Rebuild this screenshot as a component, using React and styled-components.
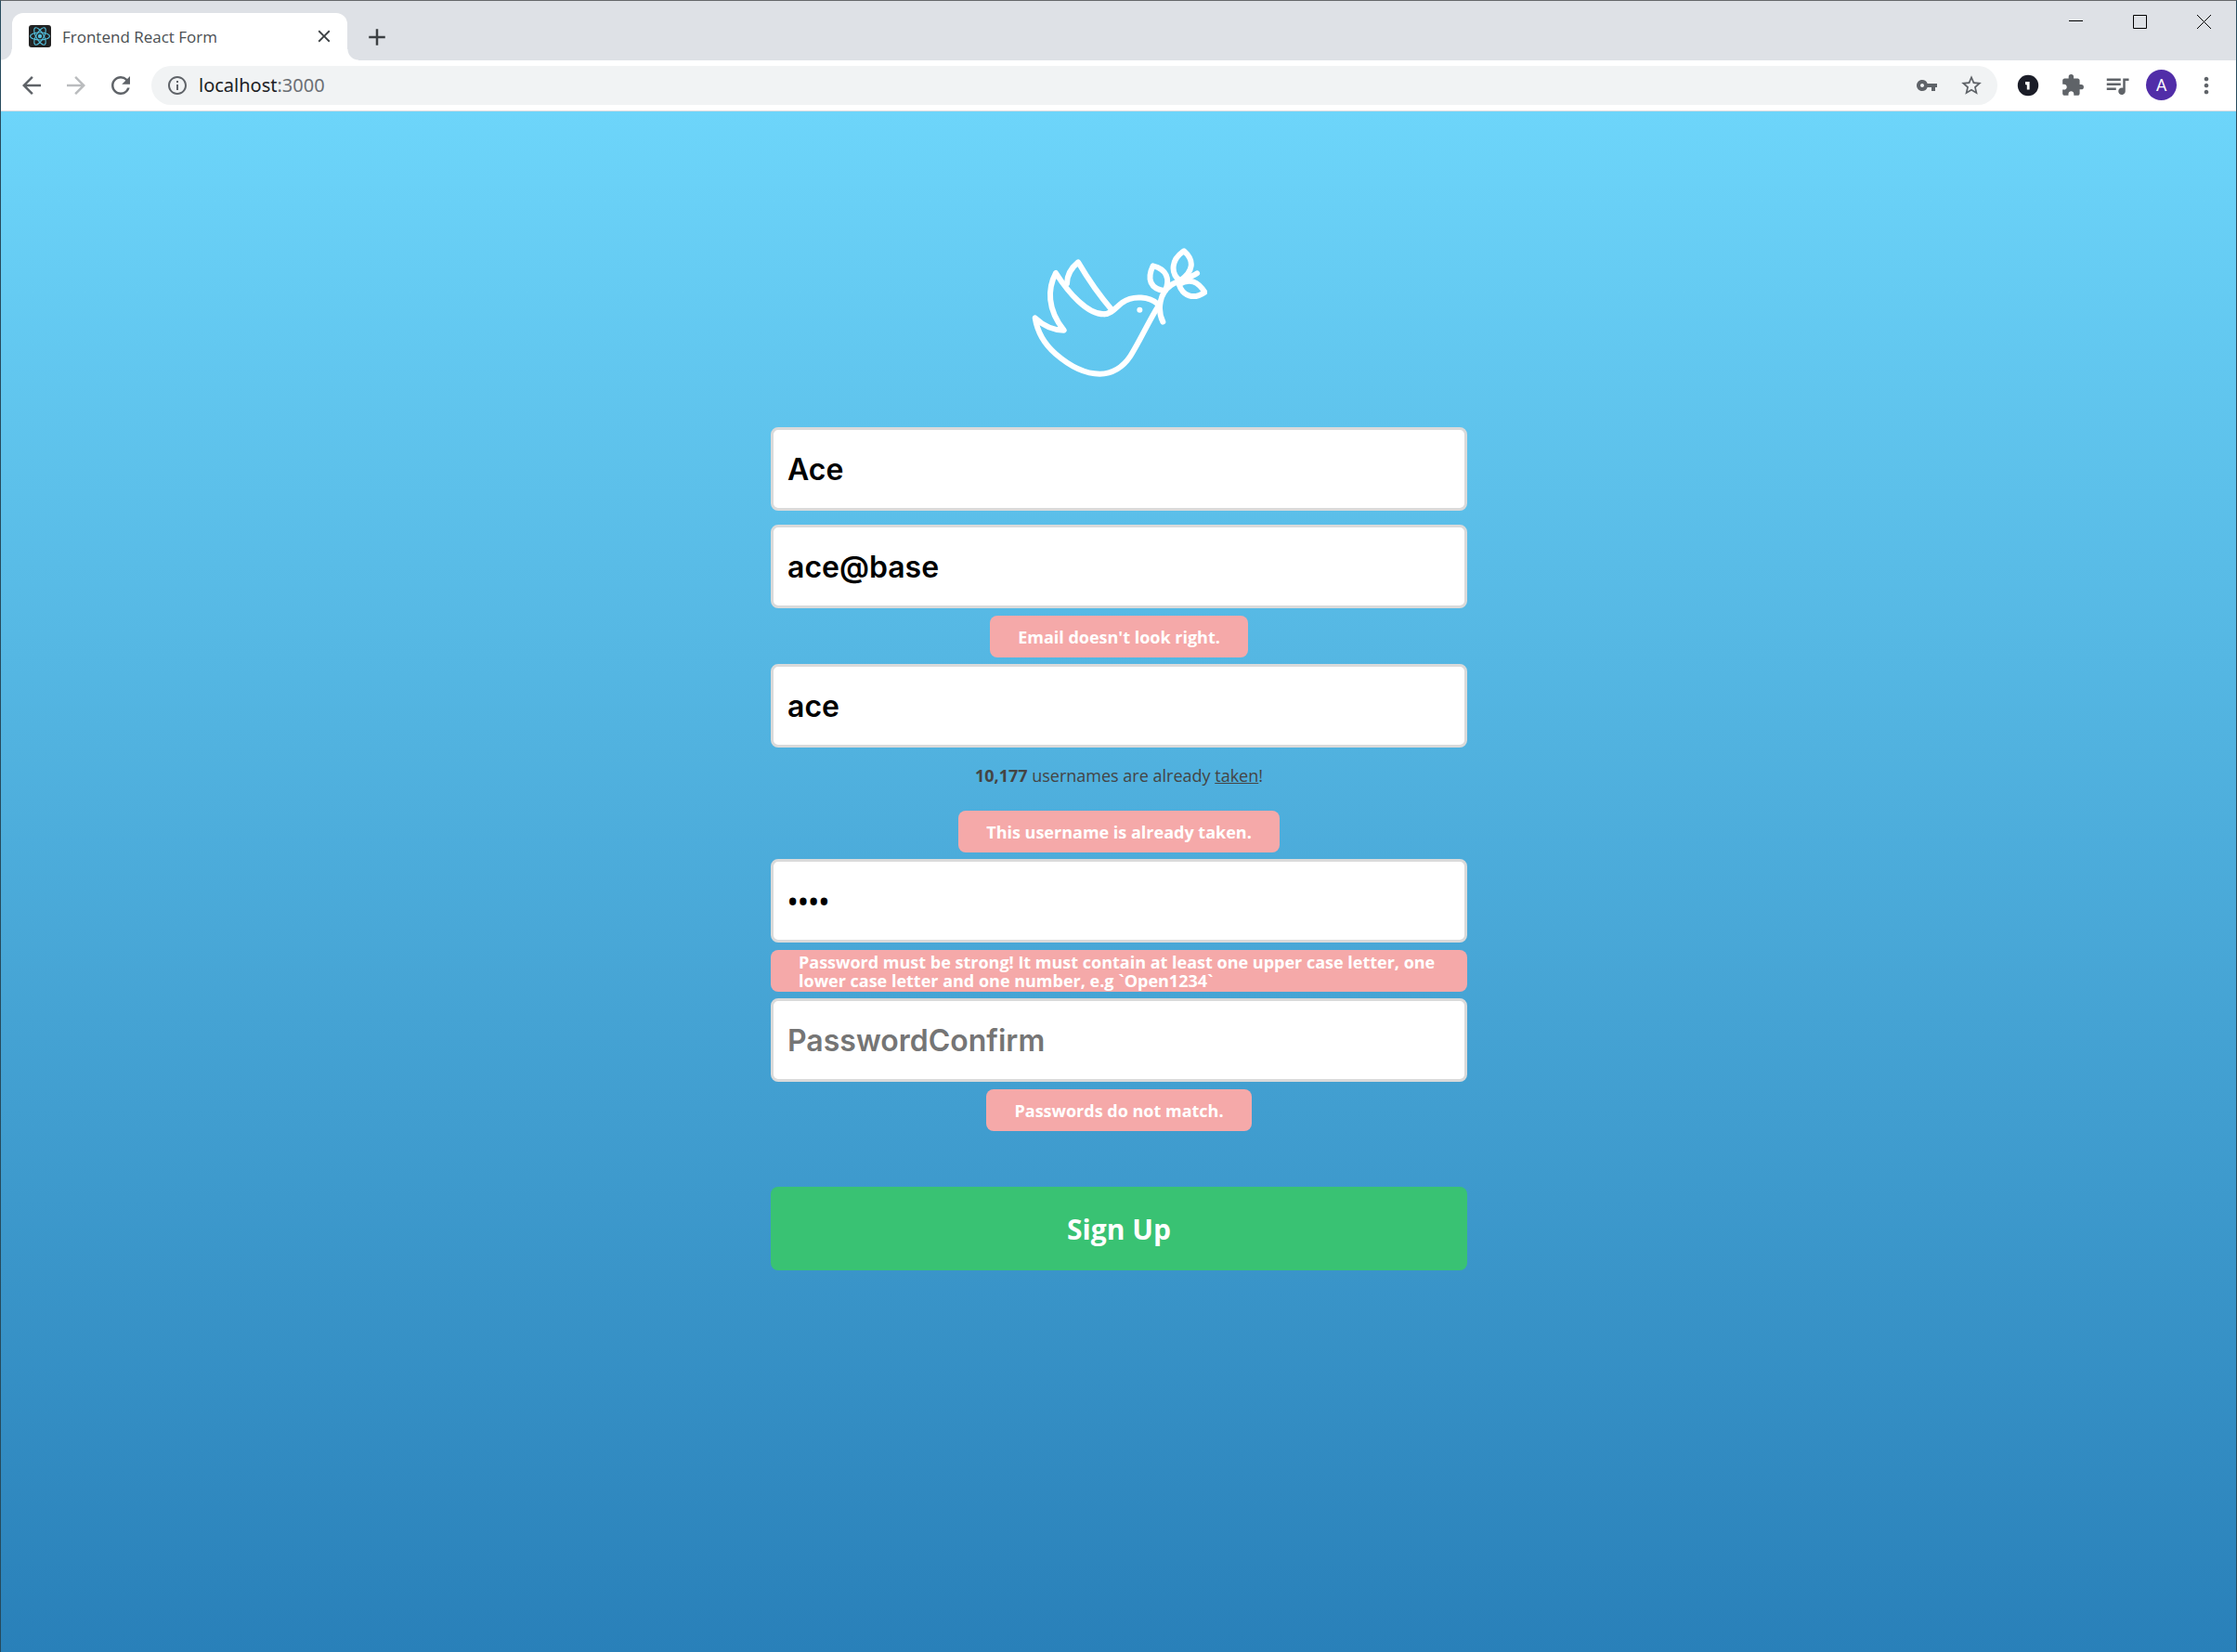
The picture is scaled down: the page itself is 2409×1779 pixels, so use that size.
import React, { useState } from "react";
import styled, { createGlobalStyle, css } from "styled-components";
import { MdArrowBack, MdArrowForward, MdRefresh, MdInfoOutline, MdVpnKey, MdStarOutline, MdExtension, MdQueueMusic, MdMoreVert, MdClose, MdAdd } from "react-icons/md";

const GlobalStyle = createGlobalStyle`
  *, *::before, *::after { box-sizing: border-box; }
  html, body, #root { height: 100%; }
  body { margin: 0; font-family: "Open Sans", "Noto Sans", sans-serif; }
`;

const Window = styled.div`
  display: flex;
  flex-direction: column;
  min-height: 100%;
  border: 1px solid #264a5c;
  border-top-color: #66686b;
  border-bottom: 0;
`;

const TabStrip = styled.div`
  display: flex;
  justify-content: space-between;
  height: 64px;
  padding-left: 12px;
  background: #dee1e6;
`;

const Tabs = styled.div`
  display: flex;
  align-items: center;
  gap: 17px;
  padding-top: 13px;
`;

const Tab = styled.div`
  position: relative;
  display: flex;
  align-items: center;
  width: 361px;
  height: 51px;
  padding: 0 10px 1px 18px;
  border-radius: 12px 12px 0 0;
  background: #fff;

  &::before, &::after {
    content: "";
    position: absolute;
    bottom: 0;
    width: 12px;
    height: 12px;
  }
  &::before {
    right: 100%;
    background: radial-gradient(circle at 0 0, transparent 11px, #fff 12px);
  }
  &::after {
    left: 100%;
    background: radial-gradient(circle at 100% 0, transparent 11px, #fff 12px);
  }
`;

const TabTitle = styled.span`
  flex: 1;
  margin-left: 12px;
  color: #4a4e52;
  font-size: 17px;
  white-space: nowrap;
`;

const IconButton = styled.button`
  display: grid;
  place-items: center;
  flex: none;
  width: 30px;
  height: 30px;
  padding: 0;
  border: 0;
  background: none;
  color: ${(p) => p.$color || "#5f6368"};
  cursor: pointer;
`;

const WindowControls = styled.div`
  display: flex;
  height: 45px;
`;

const WindowButton = styled.button`
  display: grid;
  place-items: center;
  width: 69px;
  padding: 0;
  border: 0;
  background: none;
`;

const Toolbar = styled.div`
  display: flex;
  align-items: center;
  height: 55px;
  padding: 0 17px 1px 18px;
  border-bottom: 1px solid #dadce0;
  background: #fff;
`;

const Navigation = styled.div`
  display: flex;
  gap: 18px;
  margin-right: 18px;
`;

const AddressBar = styled.div`
  display: flex;
  align-items: center;
  flex: 1;
  height: 42px;
  padding: 0 13px;
  border-radius: 21px;
  background: #f1f3f4;
`;

const Address = styled.div`
  flex: 1;
  margin-left: 8px;
  color: #202124;
  font-family: "Noto Sans", sans-serif;
  font-size: 20px;
  line-height: 30px;
`;

const Port = styled.span`
  color: #6b6f74;
`;

const AddressActions = styled.div`
  display: flex;
  gap: 18px;
`;

const Extensions = styled.div`
  display: flex;
  align-items: center;
  gap: 18px;
  margin-left: 18px;
`;

const Avatar = styled.button`
  width: 33px;
  height: 33px;
  margin: 0 -1px 0 -2px;
  padding: 0;
  border: 0;
  border-radius: 50%;
  background: #512da8;
  color: #fff;
  font: 400 18px/33px Roboto, sans-serif;
`;

const Page = styled.main`
  display: flex;
  flex: 1;
  flex-direction: column;
  align-items: center;
  padding: 135px 20px 60px 21px;
  background: linear-gradient(#6dd5fa, #2980b9);
`;

const Form = styled.form`
  display: flex;
  flex-direction: column;
  width: 100%;
  max-width: 750px;
  margin-top: 53px;
`;

const Field = styled.div`
  display: flex;
  flex-direction: column;
  min-height: 105px;
`;

const inputFont = css`
  font-family: Inter, sans-serif;
  font-size: 32px;
  font-weight: 600;
`;

const Input = styled.input`
  width: 100%;
  height: 90px;
  padding: 0 15px;
  border: 3px solid #dadada;
  border-radius: 8px;
  outline: 0;
  background: #fff;
  color: #000;
  ${inputFont}

  &[type="password"]:not(:placeholder-shown) {
    font-family: "Open Sans", sans-serif;
    font-size: 30px;
  }
  &::placeholder {
    color: #757575;
    opacity: 1;
    ${inputFont}
  }
`;

const ErrorMessage = styled.p`
  display: flex;
  align-items: center;
  align-self: center;
  min-height: 45px;
  margin: 8px 0 7px;
  padding: 0 30px;
  border-radius: 8px;
  background: #f5a9a9;
  color: #fff;
  font-size: 18px;
  font-weight: 700;
  line-height: 20px;
`;

const Hint = styled.p`
  margin: 15px 0;
  color: #444;
  font-size: 18px;
  line-height: 30px;
  text-align: center;
`;

const SubmitButton = styled.button`
  height: 90px;
  margin-top: 53px;
  border: 0;
  border-radius: 8px;
  background: #39c273;
  color: #fff;
  font-family: inherit;
  font-size: 30px;
  font-weight: 700;
  cursor: pointer;
`;

const ReactFavicon = () => (
  <svg width="24" height="24" viewBox="0 0 24 24" aria-hidden="true">
    <rect width="24" height="24" rx="3" fill="#222" />
    <g fill="none" stroke="#53c1de" strokeWidth="1.1">
      <ellipse cx="12" cy="12" rx="10.4" ry="4" />
      <ellipse cx="12" cy="12" rx="10.4" ry="4" transform="rotate(60 12 12)" />
      <ellipse cx="12" cy="12" rx="10.4" ry="4" transform="rotate(120 12 12)" />
    </g>
    <circle cx="12" cy="12" r="2.2" fill="#53c1de" />
  </svg>
);

const PasswordManagerIcon = () => (
  <svg width="24" height="24" viewBox="0 0 24 24" aria-hidden="true">
    <circle cx="12" cy="12" r="11.2" fill="#1b1d28" />
    <path d="M9 8h4.6v8.5h-2.8v-5L9 11z" fill="#fff" />
  </svg>
);

const DoveLogo = () => (
  <svg width="190" height="152" viewBox="0 0 570 456" fill="none" stroke="#fff" strokeWidth="18" strokeLinecap="round" strokeLinejoin="round" role="img" aria-label="Dove">
    <path d="M409 216C385 195 332 186 295 213C272 232 258 250 238 250" />
    <path d="M238 250C183 252 121 180 81 117C54 168 53 234 107 302C74 302 44 290 14 262C22 312 50 352 80 378C125 417 175 443 223 443C270 442 300 418 322 385C352 338 380 275 413 222" />
    <path d="M117 151C117 125 130 101 153 82C180 128 222 190 262 236" />
    <path d="M427 275C407 234 418 180 451 158C477 138 513 135 537 118" />
    <path d="M434 175C385 168 375 136 395 94C438 104 452 136 434 175Z" />
    <path d="M482 142C449 116 455 72 495 46C530 77 526 112 482 142Z" />
    <path d="M479 154C514 132 541 145 562 179C526 204 491 192 479 154Z" />
    <circle cx="352" cy="236" r="9" fill="#fff" stroke="none" />
  </svg>
);

const fields = [
  { name: "name", label: "Name", type: "text", value: "Ace" },
  { name: "email", label: "Email", type: "text", value: "ace@base", error: "Email doesn't look right." },
  { name: "username", label: "Username", type: "text", value: "ace", taken: "10,177", error: "This username is already taken." },
  {
    name: "password",
    label: "Password",
    type: "password",
    value: "aaaa",
    error: "Password must be strong! It must contain at least one upper case letter, one lower case letter and one number, e.g `Open1234`",
  },
  { name: "passwordConfirm", label: "PasswordConfirm", type: "password", value: "", error: "Passwords do not match." },
];

function FormField({ name, label, type, value: initial, taken, error }) {
  const [value, setValue] = useState(initial);
  return (
    <Field>
      <Input
        name={name}
        aria-label={label}
        aria-invalid={Boolean(error)}
        type={type}
        placeholder={label}
        value={value}
        autoComplete="off"
        spellCheck={false}
        onChange={(e) => setValue(e.target.value)}
      />
      {taken && (
        <Hint>
          <strong>{taken}</strong> usernames are already <u>taken</u>!
        </Hint>
      )}
      {error && <ErrorMessage>{error}</ErrorMessage>}
    </Field>
  );
}

function BrowserChrome() {
  return (
    <header>
      <TabStrip>
        <Tabs>
          <Tab>
            <ReactFavicon />
            <TabTitle>Frontend React Form</TabTitle>
            <IconButton $color="#3c4043" aria-label="Close tab"><MdClose size={22} /></IconButton>
          </Tab>
          <IconButton $color="#3c4043" aria-label="New tab"><MdAdd size={30} /></IconButton>
        </Tabs>
        <WindowControls>
          <WindowButton aria-label="Minimize">
            <svg width="15" height="15" stroke="#000"><path d="M0 6.5h15" /></svg>
          </WindowButton>
          <WindowButton aria-label="Maximize">
            <svg width="15" height="15" stroke="#000" fill="none"><path d="M.5.5h14v14H.5z" /></svg>
          </WindowButton>
          <WindowButton aria-label="Close">
            <svg width="15" height="15" stroke="#000"><path d="M0 0l15 15M15 0L0 15" /></svg>
          </WindowButton>
        </WindowControls>
      </TabStrip>
      <Toolbar>
        <Navigation>
          <IconButton aria-label="Back"><MdArrowBack size={30} /></IconButton>
          <IconButton $color="#babcbe" aria-label="Forward"><MdArrowForward size={30} /></IconButton>
          <IconButton aria-label="Reload"><MdRefresh size={30} /></IconButton>
        </Navigation>
        <AddressBar>
          <IconButton aria-label="Site information"><MdInfoOutline size={24} /></IconButton>
          <Address>localhost<Port>:3000</Port></Address>
          <AddressActions>
            <IconButton aria-label="Saved passwords"><MdVpnKey size={24} /></IconButton>
            <IconButton aria-label="Bookmark this page"><MdStarOutline size={26} /></IconButton>
          </AddressActions>
        </AddressBar>
        <Extensions>
          <IconButton aria-label="Password manager"><PasswordManagerIcon /></IconButton>
          <IconButton aria-label="Extensions"><MdExtension size={26} /></IconButton>
          <IconButton aria-label="Media controls"><MdQueueMusic size={30} /></IconButton>
          <Avatar aria-label="Profile">A</Avatar>
          <IconButton aria-label="Menu"><MdMoreVert size={28} /></IconButton>
        </Extensions>
      </Toolbar>
    </header>
  );
}

export default function App() {
  return (
    <Window>
      <GlobalStyle />
      <BrowserChrome />
      <Page>
        <DoveLogo />
        <Form noValidate onSubmit={(e) => e.preventDefault()}>
          {fields.map((field) => (
            <FormField key={field.name} {...field} />
          ))}
          <SubmitButton type="submit">Sign Up</SubmitButton>
        </Form>
      </Page>
    </Window>
  );
}
